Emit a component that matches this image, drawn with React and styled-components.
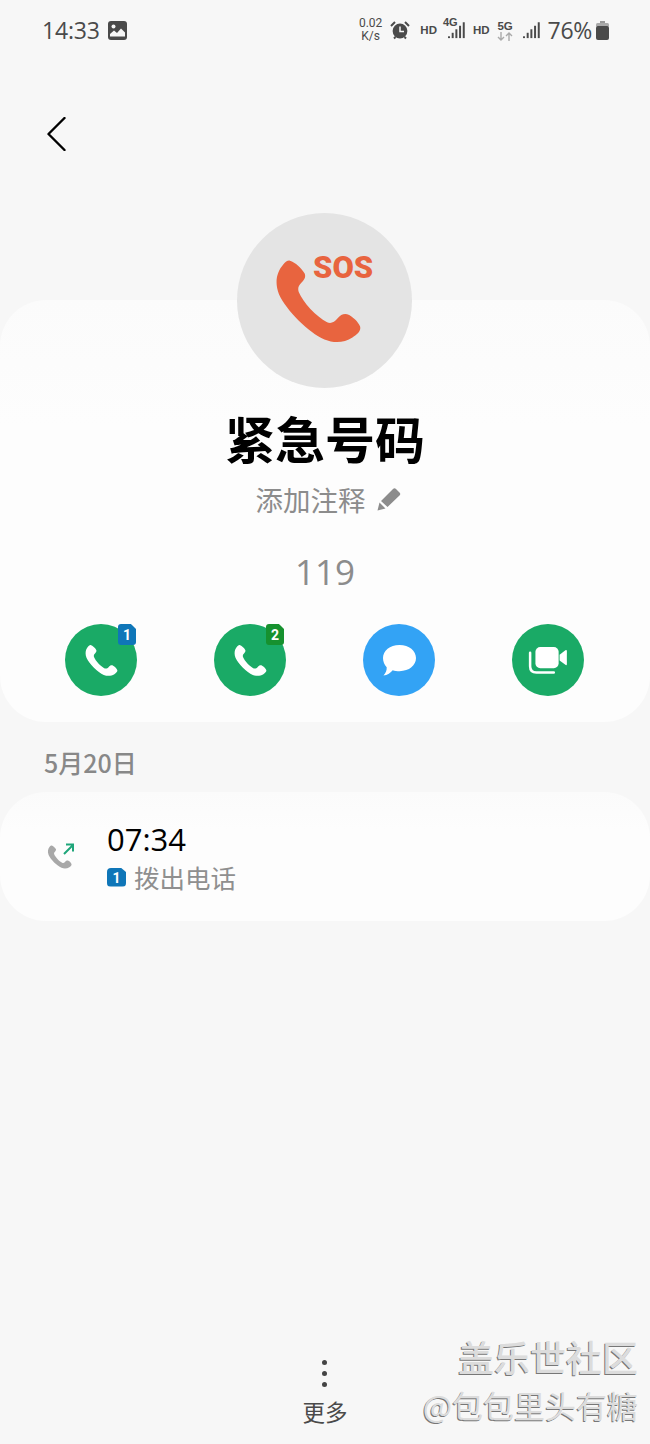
import React from 'react'
import styled, { createGlobalStyle } from 'styled-components'

const GlobalStyle = createGlobalStyle`
  html, body {
    margin: 0;
    padding: 0;
    background: #f7f7f7;
  }
  * {
    box-sizing: border-box;
  }
`

const Page = styled.div`
  position: relative;
  width: 650px;
  height: 1444px;
  overflow: hidden;
  background: #f7f7f7;
  font-family: 'Open Sans', 'Noto Sans CJK SC', sans-serif;
  display: flex;
  flex-direction: column;
`

const StatusBar = styled.div`
  height: 60px;
  padding: 0 41px 0 42px;
  display: flex;
  align-items: center;
  justify-content: space-between;
  color: #4a4a4a;
`

const StatusGroup = styled.div`
  display: flex;
  align-items: center;
  gap: ${props => props.$gap || 0}px;
`

const Clock = styled.span`
  font-size: 23px;
  letter-spacing: -0.2px;
`

const Speed = styled.span`
  font-family: 'Roboto', sans-serif;
  font-size: 12px;
  line-height: 13.5px;
  text-align: center;
  margin-right: 8px;
`

const NetLabel = styled.span`
  font-family: 'Liberation Sans', sans-serif;
  font-size: 11.5px;
  font-weight: bold;
  line-height: 12px;
  margin: ${props => props.$margin || 0};
`

const SignalStack = styled.div`
  position: relative;
  display: flex;
  flex-direction: column;
  align-items: ${props => props.$align || 'center'};
  width: ${props => props.$width}px;
`

const NetBadge = styled.span`
  position: absolute;
  left: 0;
  top: -5px;
  font-family: 'Liberation Sans', sans-serif;
  font-size: 11px;
  font-weight: bold;
  color: #4a4a4a;
`

const Spacer = styled.span`
  width: ${props => props.$width}px;
`

const Percent = styled.span`
  font-size: 23px;
  letter-spacing: -0.3px;
  margin: 0 4px 0 7px;
`

const BackRow = styled.div`
  height: 153px;
  padding: 57px 0 0 47px;
`

const Hero = styled.div`
  position: relative;
  z-index: 1;
  width: 175px;
  height: 175px;
  margin: 0 0 -88px 237px;
  border-radius: 50%;
  background: #e4e4e4;
`

const HeroPhone = styled.svg`
  position: absolute;
  left: 38px;
  top: 46px;
  width: 87px;
  height: 85px;
`

const SosLabel = styled.span`
  position: absolute;
  left: 76px;
  top: 36px;
  color: #e8643f;
  font-family: 'Roboto', sans-serif;
  font-size: 31px;
  line-height: 38px;
  font-weight: 900;
`

const Card = styled.div`
  height: ${props => props.$height}px;
  border-radius: 46px;
  background: linear-gradient(#fbfbfb, #fdfdfd 30%);
`

const ContactCard = styled(Card)`
  padding-top: 107px;
  display: flex;
  flex-direction: column;
  align-items: center;
`

const Title = styled.div`
  font-family: 'Noto Sans CJK SC', sans-serif;
  font-weight: 700;
  font-size: 50px;
  line-height: 60px;
  color: #000;
`

const NoteRow = styled.div`
  margin: 12px 0 0 6px;
  display: flex;
  align-items: center;
  gap: 11px;
  font-size: 27.5px;
  line-height: 40px;
  color: #8c8c8c;
  font-family: 'Noto Sans CJK SC', sans-serif;
`

const Number = styled.div`
  margin-top: 30px;
  font-size: 35px;
  line-height: 46px;
  color: #8c8c8c;
`

const Actions = styled.div`
  margin-top: 29px;
  width: 100%;
  padding: 0 66px 0 65px;
  display: flex;
  justify-content: space-between;
`

const ActionButton = styled.div`
  position: relative;
  width: 72px;
  height: 72px;
  border-radius: 50%;
  background: ${props => props.$color};
  display: flex;
  align-items: center;
  justify-content: center;
`

const SimBadge = styled.span`
  position: absolute;
  top: 0;
  right: ${props => props.$right || 1}px;
  width: 18px;
  height: 21px;
  background: ${props => props.$color};
  border-radius: 3px;
  clip-path: polygon(0 0, 72% 0, 100% 24%, 100% 100%, 0 100%);
  color: #fff;
  font-family: 'Roboto', sans-serif;
  font-weight: 700;
  font-size: 14px;
  line-height: 22px;
  text-align: center;
`

const InlineSim = styled(SimBadge)`
  position: static;
  width: 19px;
  height: 19px;
  line-height: 20px;
  border-radius: 4px;
`

const DateLabel = styled.div`
  height: 70px;
  padding: 22px 0 0 44px;
  font-family: 'Noto Sans CJK SC', sans-serif;
  font-size: 25px;
  line-height: 36px;
  font-weight: 500;
  color: #888;
`

const LogCard = styled(Card)`
  padding: 28px 0 0 47px;
  display: flex;
  align-items: flex-start;
`

const LogIcon = styled.svg`
  width: 28px;
  height: 30px;
  margin-top: 22px;
  flex: none;
`

const LogText = styled.div`
  margin-left: 32px;
`

const LogTime = styled.div`
  font-size: 31px;
  line-height: 38px;
  color: #000;
`

const LogSub = styled.div`
  margin-top: 1px;
  display: flex;
  align-items: center;
  gap: 8px;
  font-family: 'Noto Sans CJK SC', sans-serif;
  font-size: 25.5px;
  line-height: 36px;
  color: #8f8f8f;
`

const MoreButton = styled.div`
  position: absolute;
  left: 300px;
  top: 1360px;
  width: 50px;
  display: flex;
  flex-direction: column;
  align-items: center;
`

const Dot = styled.span`
  width: 5px;
  height: 5px;
  margin: 0 2px 6px 0;
  border-radius: 50%;
  background: #444;
`

const MoreLabel = styled.span`
  margin-top: 3px;
  font-family: 'Noto Sans CJK SC', sans-serif;
  font-size: 22.5px;
  line-height: 30px;
  color: #4a4a4a;
  white-space: nowrap;
`

const Watermark = styled.div`
  position: absolute;
  right: 12px;
  top: 1331px;
  display: flex;
  flex-direction: column;
  align-items: flex-end;
  font-family: 'Noto Sans CJK SC', sans-serif;
  white-space: nowrap;
  color: #dcdcdc;
  text-shadow: -1px 1px 0 #777;
`

const WatermarkBrand = styled.span`
  font-size: 36px;
  line-height: 50px;
  font-weight: 500;
`

const WatermarkUser = styled.span`
  font-size: 31px;
  line-height: 47px;
`

const PHONE_PATH =
  'M205 183 C222 188 240 205 250 222 C254 232 250 240 240 250 C232 258 228 266 232 278 C245 310 285 352 318 370 C330 375 340 370 350 358 C360 346 372 342 385 348 C398 356 412 368 418 382 C422 394 412 406 395 416 C370 432 340 434 310 422 C262 402 195 335 172 285 C158 250 165 218 185 195 C192 186 198 182 205 183 Z'

const Phone = ({ size = 33, color = '#fff' }) => (
  <svg width={size} height={size} viewBox='160 178 264 258'>
    <path d={PHONE_PATH} fill={color} />
  </svg>
)

const Signal = ({ width = 20, height = 18, bars = 5 }) => (
  <svg width={width} height={height} viewBox='0 0 20 18'>
    {Array.from({ length: bars }).map((_, i) => {
      const h = 2 + i * 3.9
      return <rect key={i} x={i * 4.1} y={18 - h} width='2.2' height={h} fill='#4a4a4a' />
    })}
  </svg>
)

const ArrowPair = () => (
  <svg width='16' height='9' viewBox='0 0 16 9'>
    <path d='M4 0 V8 M1 5 L4 8 L7 5' stroke='#aaa' strokeWidth='1.4' fill='none' />
    <path d='M12 9 V1 M9 4 L12 1 L15 4' stroke='#aaa' strokeWidth='1.4' fill='none' />
  </svg>
)

export default function App() {
  return (
    <Page>
      <GlobalStyle />
      <StatusBar>
        <StatusGroup $gap={8}>
          <Clock>14:33</Clock>
          <svg width='19' height='19' viewBox='0 0 19 19'>
            <rect width='19' height='19' rx='3' fill='#4a4a4a' />
            <circle cx='5.5' cy='5.5' r='2' fill='#f7f7f7' />
            <path d='M2 15.5 V13 L6 9.5 L9 12 L13 7.5 L17 11.5 V15.5 Z' fill='#f7f7f7' />
          </svg>
        </StatusGroup>
        <StatusGroup>
          <Speed>0.02<br />K/s</Speed>
          <svg width='20' height='20' viewBox='0 0 20 20'>
            <circle cx='10' cy='11' r='7.4' fill='#4a4a4a' />
            <path d='M10 6.5 V11.5 H14' stroke='#f7f7f7' strokeWidth='1.5' fill='none' />
            <path d='M1 6 L5 2 M19 6 L15 2 M4 18.5 L5.5 17 M16 18.5 L14.5 17' stroke='#4a4a4a' strokeWidth='2' />
          </svg>
          <NetLabel $margin='0 6px 0 10px'>HD</NetLabel>
          <SignalStack $width={23} $align='flex-end'>
            <Signal width={18} height={18} />
            <NetBadge>4G</NetBadge>
          </SignalStack>
          <NetLabel $margin='0 7px 0 7px'>HD</NetLabel>
          <SignalStack $width={17}>
            <NetLabel>5G</NetLabel>
            <ArrowPair />
          </SignalStack>
          <Spacer $width={9} />
          <Signal width={18} height={18} />
          <Percent>76%</Percent>
          <svg width='13' height='19' viewBox='0 0 13 19'>
            <path d='M4 0 H9 V2 H4 Z' fill='#999' />
            <rect y='2' width='13' height='4' rx='1.5' fill='#aaa' />
            <rect y='5' width='13' height='14' rx='2' fill='#4a4a4a' />
          </svg>
        </StatusGroup>
      </StatusBar>

      <BackRow>
        <svg width='19' height='34' viewBox='0 0 19 34'>
          <path d='M17.5 1 L1.5 17 L17.5 33' stroke='#000' strokeWidth='2.4' fill='none' strokeLinecap='round' strokeLinejoin='round' />
        </svg>
      </BackRow>

      <Hero>
        <HeroPhone viewBox='160 178 264 258'>
          <path d={PHONE_PATH} fill='#e8643f' />
        </HeroPhone>
        <SosLabel>SOS</SosLabel>
      </Hero>

      <ContactCard $height={422}>
        <Title>紧急号码</Title>
        <NoteRow>
          添加注释
          <svg width='24' height='24' viewBox='0 0 24 24'>
            <path d='M0.5 23.5 L2.5 15.5 L8.5 21.5 Z M4 14 L16 2 Q17.5 0.5 19 2 L22.5 5.5 Q24 7 22.5 8.5 L10.5 20 Z' fill='#8c8c8c' />
          </svg>
        </NoteRow>
        <Number>119</Number>
        <Actions>
          <ActionButton $color='#1aaa66'>
            <Phone />
            <SimBadge $color='#0f76b8'>1</SimBadge>
          </ActionButton>
          <ActionButton $color='#1aaa66'>
            <Phone />
            <SimBadge $color='#16912f' $right={2}>2</SimBadge>
          </ActionButton>
          <ActionButton $color='#33a3f5'>
            <svg width='35' height='33' viewBox='0 0 36 34'>
              <path d='M18 1 C28 1 35 7 35 14.5 C35 22 28 28 18 28 C15.5 28 13 27.6 11 27 C9 29.5 5.5 32 1.5 32.5 C4 30 5 27 4.8 24 C2.4 21.5 1 18 1 14.5 C1 7 8 1 18 1 Z' fill='#fff' />
            </svg>
          </ActionButton>
          <ActionButton $color='#1aaa66'>
            <svg width='40' height='29' viewBox='0 0 40 30'>
              <rect x='7' y='1' width='24' height='22' rx='5' fill='#fff' />
              <path d='M32 9 L38 4.5 Q39.5 3.5 39.5 5.5 V18.5 Q39.5 20.5 38 19.5 L32 15 Z' fill='#fff' />
              <path d='M1.5 7 V21 Q1.5 27.5 8 27.5 H26' stroke='#fff' strokeWidth='2.6' fill='none' strokeLinecap='round' />
            </svg>
          </ActionButton>
        </Actions>
      </ContactCard>

      <DateLabel>5月20日</DateLabel>

      <LogCard $height={129}>
        <LogIcon viewBox='0 0 28 30'>
          <g transform='translate(0.5 3) scale(0.093 0.093) translate(-160 -178)'>
            <path d={PHONE_PATH} fill='#a8a8a8' />
          </g>
          <path d='M17 12 L26 3 M19 2.5 H26 V9.5' stroke='#1fa67a' strokeWidth='2' fill='none' />
        </LogIcon>
        <LogText>
          <LogTime>07:34</LogTime>
          <LogSub>
            <InlineSim $color='#0f76b8'>1</InlineSim>
            拨出电话
          </LogSub>
        </LogText>
      </LogCard>

      <MoreButton>
        <Dot />
        <Dot />
        <Dot />
        <MoreLabel>更多</MoreLabel>
      </MoreButton>

      <Watermark>
        <WatermarkBrand>盖乐世社区</WatermarkBrand>
        <WatermarkUser>@包包里头有糖</WatermarkUser>
      </Watermark>
    </Page>
  )
}
